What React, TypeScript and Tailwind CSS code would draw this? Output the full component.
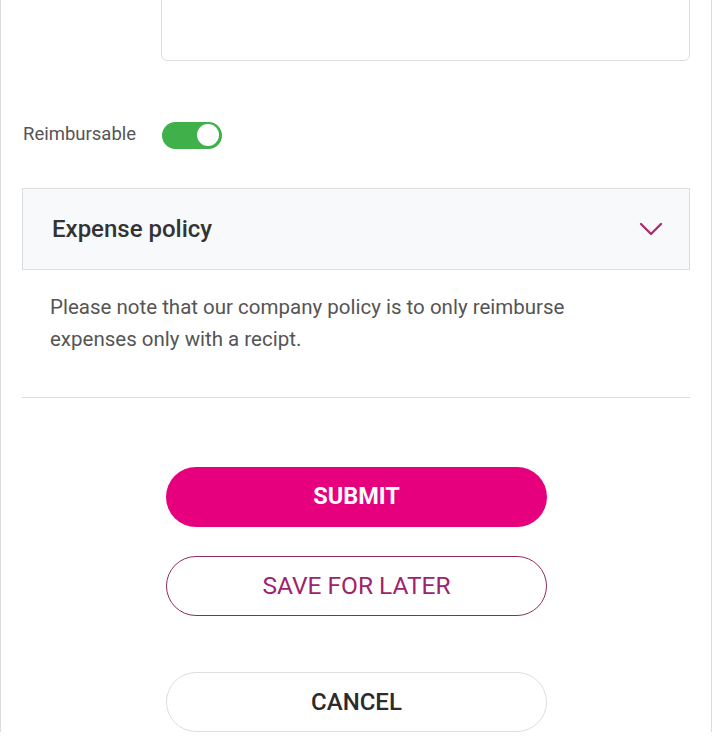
import React, { useState } from 'react';

const App: React.FC = () => {
  const [reimbursable, setReimbursable] = useState(true);
  const [open, setOpen] = useState(false);

  return (
    <div className="w-[713px] h-[741px] overflow-hidden bg-white" style={{ fontFamily: 'Roboto, "Open Sans", sans-serif' }}>
      <div className="w-[712px] min-h-[741px] border-x border-[#dcdcdc] -mt-[40px]">
        {/* Notes field (scrolled past) */}
        <div className="ml-[160px] mr-[21px]">
          <textarea className="block w-full h-[101px] rounded-md border border-[#dddddd] resize-none outline-none" />
        </div>

        {/* Reimbursable toggle */}
        <div className="flex items-center mt-[60px] pl-[22px] h-[28px]">
          <span className="w-[139px] text-[18.5px] text-[#555555]">Reimbursable</span>
          <button
            onClick={() => setReimbursable(!reimbursable)}
            className={`relative w-[60px] h-[27px] rounded-full ${reimbursable ? 'bg-[#3fb04a]' : 'bg-[#cccccc]'}`}
          >
            <span className={`absolute top-[2.5px] w-[22px] h-[22px] rounded-full bg-white ${reimbursable ? 'right-[3px]' : 'left-[3px]'}`} />
          </button>
        </div>

        {/* Expense policy accordion */}
        <div className="mx-[21px] mt-[39px]">
          <button
            onClick={() => setOpen(!open)}
            className="flex w-full h-[82px] items-center justify-between border border-[#dddddd] bg-[#f7f9fb] pl-[29px] pr-[26px]"
          >
            <span className="text-[24px] font-medium text-[#333333]">Expense policy</span>
            <svg width="24" height="14" viewBox="0 0 24 14" fill="none" className={open ? 'rotate-180' : ''}>
              <path d="M2 2l10 10L22 2" stroke="#a8306e" strokeWidth="2.4" strokeLinecap="round" strokeLinejoin="round" />
            </svg>
          </button>
        </div>
        <p className="mx-[21px] pl-[28px] pr-[40px] mt-[21px] text-[20.5px] leading-[32px] text-[#555555]">
          Please note that our company policy is to only reimburse expenses only with a recipt.
        </p>

        <div className="mx-[21px] mt-[42px] border-t border-[#dddddd]" />

        {/* Actions */}
        <div className="flex flex-col items-center pl-[1px] mt-[69px]">
          <button className="w-[381px] h-[60px] rounded-full bg-[#e6007e] text-white text-[23.5px] font-bold">
            SUBMIT
          </button>
          <button className="w-[381px] h-[60px] mt-[29px] rounded-full border-[1.5px] border-[#8e2a63] bg-white text-[#a0236b] text-[24.5px]">
            SAVE FOR LATER
          </button>
          <button className="w-[381px] h-[60px] mt-[56px] rounded-full border border-[#dedede] bg-white text-[#2b2b2b] text-[24px] font-medium">
            CANCEL
          </button>
        </div>
      </div>
    </div>
  );
};

export default App;
